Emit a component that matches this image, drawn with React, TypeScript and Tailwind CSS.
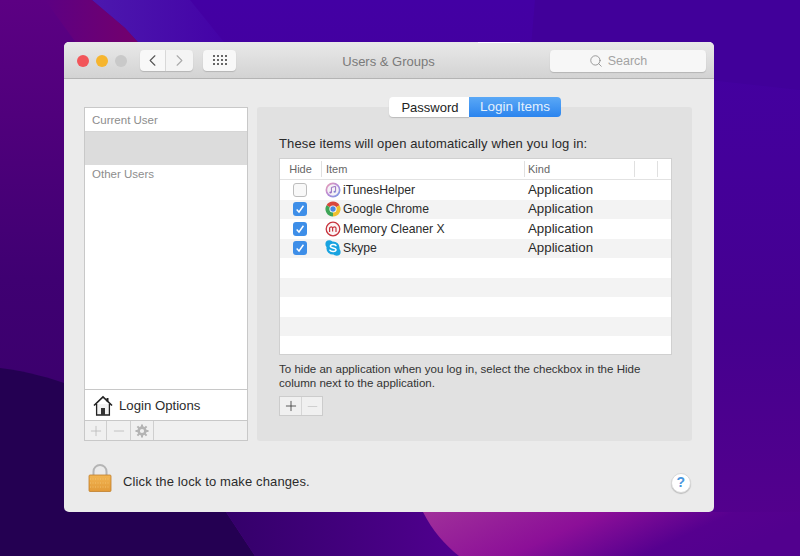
import React from 'react';
import { ChevronLeft, ChevronRight, Minus, Plus, Search } from 'lucide-react';

const font = { fontFamily: '"Liberation Sans", Arial, sans-serif' };

const items = [
   { name: 'iTunesHelper', checked: false, icon: 'itunes' },
   { name: 'Google Chrome', checked: true, icon: 'chrome' },
   { name: 'Memory Cleaner X', checked: true, icon: 'cleaner' },
   { name: 'Skype', checked: true, icon: 'skype' },
];

function Wallpaper() {
   return (
      <svg className="absolute inset-0" width="800" height="556" viewBox="0 0 800 556">
         <defs>
            <linearGradient id="base" x1="0" y1="0" x2="0" y2="1">
               <stop offset="0" stopColor="#4300a4" />
               <stop offset="0.6" stopColor="#45008f" />
               <stop offset="1" stopColor="#56008c" />
            </linearGradient>
            <linearGradient id="left" x1="0" y1="0" x2="0" y2="1">
               <stop offset="0" stopColor="#5c0083" />
               <stop offset="0.5" stopColor="#3f0072" />
               <stop offset="1" stopColor="#360067" />
            </linearGradient>
            <linearGradient id="band" x1="0" y1="0" x2="1" y2="0">
               <stop offset="0" stopColor="#5c0083" />
               <stop offset="1" stopColor="#780068" />
            </linearGradient>
            <linearGradient id="blue" x1="0" y1="0" x2="1" y2="0">
               <stop offset="0" stopColor="#4c18ae" />
               <stop offset="1" stopColor="#4300a6" />
            </linearGradient>
            <linearGradient id="swirl" x1="0" y1="0" x2="1" y2="0.25">
               <stop offset="0" stopColor="#a0309a" />
               <stop offset="0.45" stopColor="#8c0f98" />
               <stop offset="0.78" stopColor="#56008f" />
               <stop offset="1" stopColor="#52008e" />
            </linearGradient>
            <linearGradient id="mid" x1="0" y1="0" x2="1" y2="0">
               <stop offset="0" stopColor="#34006a" />
               <stop offset="1" stopColor="#50008f" />
            </linearGradient>
         </defs>
         <rect width="800" height="556" fill="url(#base)" />
         <path d="M535 0 L800 0 L800 90 L530 60 Z" fill="#41009a" />
         <path d="M0 0 H90 L110 8 L150 42 L64 110 L64 556 H0 Z" fill="url(#left)" />
         <path d="M92 0 L125 28 L156 62 L240 62 L190 0 Z" fill="url(#blue)" />
         <path d="M45 0 H92 L125 28 L156 62 L90 62 Z" fill="url(#band)" />
         <path d="M0 368 C30 372 50 378 70 385 L70 556 H0 Z" fill="#240052" />
         <path d="M60 512 H226 L255 556 H60 Z" fill="#240052" />
         <path d="M226 512 H423 C432 530 445 545 459 556 H255 Z" fill="url(#mid)" />
         <path d="M423 512 H800 V556 H459 C445 545 432 530 423 512 Z" fill="url(#swirl)" />
      </svg>
   );
}

function TrafficLight({ color }: { color: string }) {
   return <span className={`h-3 w-3 rounded-full ${color}`} />;
}

function ITunesIcon() {
   return (
      <svg width="16" height="16" viewBox="0 0 16 16">
         <defs>
            <linearGradient id="it" x1="0" y1="0" x2="1" y2="1">
               <stop offset="0" stopColor="#f0a0b0" />
               <stop offset="0.5" stopColor="#b58ad8" />
               <stop offset="1" stopColor="#6f9fe8" />
            </linearGradient>
         </defs>
         <circle cx="8" cy="8" r="7.5" fill="url(#it)" />
         <circle cx="8" cy="8" r="5.8" fill="#f4f2f6" />
         <path d="M6.4 10.6V5.4L10.6 4.4V9.6" fill="none" stroke="#9a6fc0" strokeWidth="1" />
         <ellipse cx="5.5" cy="10.6" rx="1.2" ry="1" fill="#9a6fc0" />
         <ellipse cx="9.7" cy="9.7" rx="1.2" ry="1" fill="#7f86d0" />
      </svg>
   );
}

function ChromeIcon() {
   return (
      <svg width="16" height="16" viewBox="0 0 16 16">
         <path d="M8 8 L1.5 4.2 A7.5 7.5 0 0 1 14.5 4.2 Z" fill="#d9473c" />
         <path d="M8 8 L14.5 4.2 A7.5 7.5 0 0 1 8 15.5 Z" fill="#efc02f" />
         <path d="M8 8 L8 15.5 A7.5 7.5 0 0 1 1.5 4.2 Z" fill="#3fa558" />
         <circle cx="8" cy="8" r="3.6" fill="#fff" />
         <circle cx="8" cy="8" r="2.7" fill="#4a86e0" />
      </svg>
   );
}

function CleanerIcon() {
   return (
      <svg width="16" height="16" viewBox="0 0 16 16">
         <circle cx="8" cy="8" r="6.8" fill="#fbf4f4" stroke="#c8353f" strokeWidth="1.3" />
         <path d="M4.6 11V6.4 M4.6 7 C5.4 5.4 7.4 5.4 7.6 7 V10.4 M7.6 7 C8.4 5.4 10.8 5.4 11 7 V11" fill="none" stroke="#c8353f" strokeWidth="1.2" />
      </svg>
   );
}

function SkypeIcon() {
   return (
      <svg width="16" height="16" viewBox="0 0 16 16">
         <circle cx="4.2" cy="4" r="3.8" fill="#19a3e0" />
         <circle cx="11.8" cy="12" r="3.8" fill="#19a3e0" />
         <circle cx="8" cy="8" r="6.6" fill="#19a3e0" />
         <path d="M11 5.6 C10 4 5.4 4 5.4 6.2 C5.4 8.4 11 7.4 11 9.8 C11 12 6 12 4.9 10.2" fill="none" stroke="#fff" strokeWidth="1.5" strokeLinecap="round" />
      </svg>
   );
}

function ItemIcon({ name }: { name: string }) {
   if (name === 'itunes') return <ITunesIcon />;
   if (name === 'chrome') return <ChromeIcon />;
   if (name === 'cleaner') return <CleanerIcon />;
   return <SkypeIcon />;
}

function Checkbox({ checked }: { checked: boolean }) {
   if (!checked) {
      return <span className="h-[14px] w-[14px] rounded-[3px] border border-[#bdbdbd] bg-[#f8f8f8]" />;
   }
   return (
      <span className="flex h-[14px] w-[14px] items-center justify-center rounded-[3px] bg-[#3d8ee8]">
         <svg width="10" height="10" viewBox="0 0 9 9">
            <path d="M1.5 5 L3.6 7.2 L7.6 1.6" fill="none" stroke="#fff" strokeWidth="1.3" />
         </svg>
      </span>
   );
}

function Gear() {
   return (
      <svg width="14" height="14" viewBox="0 0 14 14">
         <circle cx="7" cy="7" r="3.4" fill="none" stroke="#b4b4b4" strokeWidth="2.6" />
         <path d="M7 .5V3 M7 11V13.5 M.5 7H3 M11 7H13.5 M2.4 2.4L4.2 4.2 M9.8 9.8L11.6 11.6 M11.6 2.4L9.8 4.2 M4.2 9.8L2.4 11.6" stroke="#b4b4b4" strokeWidth="2" />
      </svg>
   );
}

function House() {
   return (
      <svg width="20" height="21" viewBox="0 0 20 21">
         <path d="M1 10.5 L10 2 L19 10.5" fill="none" stroke="#222" strokeWidth="1.7" />
         <path d="M14.5 3V6.5" stroke="#222" strokeWidth="2" />
         <path d="M3.6 9V20H16.4V9" fill="#f2f2f2" stroke="#222" strokeWidth="1.3" />
         <rect x="8" y="13" width="4" height="7" fill="#333" />
      </svg>
   );
}

function Lock() {
   return (
      <svg width="24" height="28" viewBox="0 0 24 28">
         <defs>
            <linearGradient id="lk" x1="0" y1="0" x2="0" y2="1">
               <stop offset="0" stopColor="#f2b552" />
               <stop offset="1" stopColor="#e29a38" />
            </linearGradient>
         </defs>
         <path d="M5.5 11V7.5a6.5 6.5 0 0 1 13 0V11" fill="none" stroke="#b5b5b5" strokeWidth="2" />
         <rect x="1" y="11" width="22" height="16.5" rx="1" fill="url(#lk)" stroke="#c07f2c" strokeWidth="0.8" />
         <path d="M2 15H22 M2 19H22 M2 23H22" stroke="#f7cd80" strokeWidth="0.7" strokeDasharray="1 1.5" />
      </svg>
   );
}

export default function App() {
   return (
      <div className="relative h-[556px] w-[800px] overflow-hidden bg-[#45008f]" style={font}>
         <Wallpaper />
         <div className="relative pl-[64px] pt-[42px]">
            <div className="h-[470px] w-[650px] overflow-hidden rounded-[5px] bg-[#ebebeb]">
               {/* title bar */}
               <div className="relative flex h-[37px] items-center border-b border-[#b4b4b4] bg-gradient-to-b from-[#e9e9e9] to-[#d3d3d3] pl-[13px] pr-[8px]">
                  <div className="absolute left-[414px] top-0 h-[1px] w-[42px] bg-white" />
                  <div className="mt-[2px] flex items-center gap-[7px]">
                     <TrafficLight color="bg-[#f2555a]" />
                     <TrafficLight color="bg-[#f6b52e]" />
                     <TrafficLight color="bg-[#c9c9c9]" />
                  </div>
                  <div className="ml-[13px] flex h-[21px]">
                     <div className="flex w-[26px] items-center justify-center rounded-l-[4px] border-r border-[#dcdcdc] bg-[#f8f8f8] shadow-[0_1px_1px_#b5b5b5]">
                        <ChevronLeft size={19} strokeWidth={1.4} className="text-[#555]" />
                     </div>
                     <div className="flex w-[27px] items-center justify-center rounded-r-[4px] bg-[#f4f4f4] shadow-[0_1px_1px_#b5b5b5]">
                        <ChevronRight size={19} strokeWidth={1.4} className="text-[#aaa]" />
                     </div>
                  </div>
                  <div className="ml-[10px] grid h-[21px] w-[33px] grid-cols-[repeat(4,2px)] content-center justify-center gap-[2px] rounded-[4px] bg-[#f8f8f8] shadow-[0_1px_1px_#b5b5b5]">
                     {Array.from({ length: 12 }).map((_, i) => (
                        <span key={i} className="h-[2px] w-[2px] bg-[#666]" />
                     ))}
                  </div>
                  <div className="flex-1 pr-[9px] pt-[3px] text-center text-[13px] text-[#7a7a7a]">Users &amp; Groups</div>
                  <div className="mt-[2px] flex h-[22px] w-[156px] items-center justify-center gap-[5px] rounded-[4px] bg-[#f7f7f7] pr-[20px] text-[12.5px] text-[#a3a3a3] shadow-[0_1px_1px_#b5b5b5]">
                     <Search size={14} strokeWidth={1.4} className="text-[#888]" />
                     <span>Search</span>
                  </div>
               </div>

               {/* content */}
               <div className="flex h-[362px] gap-[9px] pl-[20px] pt-[28px]">
                  <div className="flex h-[334px] w-[164px] flex-col border border-[#c8c8c8] bg-white">
                     <div className="flex h-[23px] items-center pl-[7px] pt-[2px] text-[11.5px] text-[#8d8d8d]">Current User</div>
                     <div className="h-[34px] border-t border-[#d6d6d6] bg-[#dcdcdc]" />
                     <div className="flex h-[19px] items-center pl-[7px] text-[11.5px] text-[#8d8d8d]">Other Users</div>
                     <div className="flex-1" />
                     <div className="flex h-[31px] items-center gap-[6px] border-t border-[#c8c8c8] pl-[8px] text-[13.2px] text-[#2b2b2b]">
                        <House />
                        <span className="pt-[2px]">Login Options</span>
                     </div>
                     <div className="flex h-[20px] items-center border-t border-[#c8c8c8] bg-[#f0f0f0] text-[#b8b8b8]">
                        <div className="flex h-full w-[22px] items-center justify-center border-r border-[#cfcfcf]">
                           <Plus size={16} strokeWidth={1.2} />
                        </div>
                        <div className="flex h-full w-[24px] items-center justify-center border-r border-[#cfcfcf]">
                           <Minus size={16} strokeWidth={1.2} />
                        </div>
                        <div className="flex h-full w-[23px] items-center justify-center border-r border-[#cfcfcf]">
                           <Gear />
                        </div>
                     </div>
                  </div>

                  <div className="relative h-[334px] w-[435px] rounded-[3px] bg-[#e1e1e1] pl-[22px] pt-[28px]">
                     {/* tabs */}
                     <div className="absolute left-[132px] top-[-10px] flex h-[20px] text-[13px]">
                        <div className="flex w-[80px] items-center justify-center rounded-l-[4px] bg-white pl-[2px] pt-[1px] text-[#222] shadow-[0_1px_1px_#bbb]">Password</div>
                        <div className="flex w-[92px] items-center justify-center rounded-r-[4px] bg-gradient-to-b from-[#5aa8f6] to-[#2a84ee] pt-[1px] text-[13.5px] text-[#e4f0fc]">Login Items</div>
                     </div>
                     <div className="text-[13px] leading-[18px] tracking-[0.12px] text-[#2a2a2a]">These items will open automatically when you log in:</div>
                     <div className="mt-[5px] w-[393px] border border-[#d0d0d0] bg-white">
                        <div className="flex h-[21px] items-center border-b border-[#e2e2e2] text-[11px] text-[#666]">
                           <div className="flex h-[16px] w-[42px] items-center justify-center border-r border-[#e0e0e0]">Hide</div>
                           <div className="flex h-[16px] w-[203px] items-center border-r border-[#e0e0e0] pl-[4px]">Item</div>
                           <div className="flex h-[16px] w-[110px] items-center border-r border-[#e0e0e0] pl-[3px]">Kind</div>
                           <div className="h-[16px] w-[23px] border-r border-[#e0e0e0]" />
                        </div>
                        {items.map((item, index) => (
                           <div
                              key={item.name}
                              className={`flex h-[19.5px] items-center text-[#2b2b2b] ${
                                 index % 2 === 1 ? 'bg-[#f3f3f3]' : 'bg-white'
                              }`}
                           >
                              <div className="flex w-[42px] justify-center pr-[2px]">
                                 <Checkbox checked={item.checked} />
                              </div>
                              <div className="flex w-[203px] items-center gap-[2px] pl-[3px] text-[12.2px]">
                                 <ItemIcon name={item.icon} />
                                 <span>{item.name}</span>
                              </div>
                              <div className="pl-[3px] text-[13.3px]">Application</div>
                           </div>
                        ))}
                        {[0, 1, 2, 3].map((index) => (
                           <div key={index} className={`h-[19.5px] ${index % 2 === 1 ? 'bg-[#f3f3f3]' : 'bg-white'}`} />
                        ))}
                        <div className="h-[18px] bg-white" />
                     </div>
                     <div className="mt-[7px] w-[393px] text-[11.55px] leading-[14px] text-[#333]">
                        To hide an application when you log in, select the checkbox in the Hide column next to the application.
                     </div>
                     <div className="mt-[6px] flex h-[20px] w-[44px] border border-[#cccccc] bg-[#f0f0f0]">
                        <div className="flex w-[22px] items-center justify-center border-r border-[#d6d6d6] text-[#333]">
                           <Plus size={16} strokeWidth={1.2} />
                        </div>
                        <div className="flex flex-1 items-center justify-center text-[#c4c4c4]">
                           <Minus size={15} strokeWidth={1.2} />
                        </div>
                     </div>
                  </div>
               </div>

               {/* footer */}
               <div className="flex h-[71px] items-center pl-[24px]">
                  <div className="mt-[3px]">
                     <Lock />
                  </div>
                  <span className="ml-[11px] mt-[10px] text-[13px] tracking-[0.13px] text-[#2b2b2b]">Click the lock to make changes.</span>
                  <div className="ml-[361px] mt-[12px] flex h-[20px] w-[20px] items-center justify-center rounded-full border border-[#d8d8d8] bg-white text-[14px] font-bold text-[#4a96de] shadow-[0_1px_1px_#bbb]">
                     ?
                  </div>
               </div>
            </div>
         </div>
      </div>
   );
}
